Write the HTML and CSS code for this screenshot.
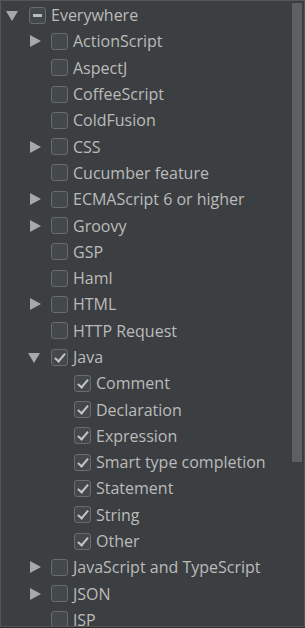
FILE: index.html
```html
<!DOCTYPE html>
<html lang="en">
<head>
  <meta charset="UTF-8" />
  <title>Live Templates</title>
  <link rel="stylesheet" href="styles.css">
</head>
<body>
  <div class="panel">
    <div class="tree">
      <div class="row lvl0"><span class="arrow down"></span><span class="box mixed"></span><span class="label">Everywhere</span></div>
      <div class="row lvl1"><span class="arrow right"></span><span class="box"></span><span class="label">ActionScript</span></div>
      <div class="row lvl1"><span class="arrow"></span><span class="box"></span><span class="label">AspectJ</span></div>
      <div class="row lvl1"><span class="arrow"></span><span class="box"></span><span class="label">CoffeeScript</span></div>
      <div class="row lvl1"><span class="arrow"></span><span class="box"></span><span class="label">ColdFusion</span></div>
      <div class="row lvl1"><span class="arrow right"></span><span class="box"></span><span class="label">CSS</span></div>
      <div class="row lvl1"><span class="arrow"></span><span class="box"></span><span class="label">Cucumber feature</span></div>
      <div class="row lvl1"><span class="arrow right"></span><span class="box"></span><span class="label">ECMAScript 6 or higher</span></div>
      <div class="row lvl1"><span class="arrow right"></span><span class="box"></span><span class="label">Groovy</span></div>
      <div class="row lvl1"><span class="arrow"></span><span class="box"></span><span class="label">GSP</span></div>
      <div class="row lvl1"><span class="arrow"></span><span class="box"></span><span class="label">Haml</span></div>
      <div class="row lvl1"><span class="arrow right"></span><span class="box"></span><span class="label">HTML</span></div>
      <div class="row lvl1"><span class="arrow"></span><span class="box"></span><span class="label">HTTP Request</span></div>
      <div class="row lvl1"><span class="arrow down"></span><span class="box checked"></span><span class="label">Java</span></div>
      <div class="row lvl2"><span class="box checked"></span><span class="label">Comment</span></div>
      <div class="row lvl2"><span class="box checked"></span><span class="label">Declaration</span></div>
      <div class="row lvl2"><span class="box checked"></span><span class="label">Expression</span></div>
      <div class="row lvl2"><span class="box checked"></span><span class="label">Smart type completion</span></div>
      <div class="row lvl2"><span class="box checked"></span><span class="label">Statement</span></div>
      <div class="row lvl2"><span class="box checked"></span><span class="label">String</span></div>
      <div class="row lvl2"><span class="box checked"></span><span class="label">Other</span></div>
      <div class="row lvl1"><span class="arrow right"></span><span class="box"></span><span class="label">JavaScript and TypeScript</span></div>
      <div class="row lvl1"><span class="arrow right"></span><span class="box"></span><span class="label">JSON</span></div>
      <div class="row lvl1"><span class="arrow"></span><span class="box"></span><span class="label">JSP</span></div>
    </div>
    <div class="scrollbar"><div class="thumb"></div></div>
  </div>
</body>
</html>
```
FILE: styles.css
```css
html, body {
  margin: 0;
  padding: 0;
  background-color: #2b2b2b;
}

body {
  font-family: "Open Sans", "Noto Sans", sans-serif;
  font-size: 16px;
  color: #bbbbbb;
}

.panel {
  width: 305px;
  height: 627px;
  box-sizing: border-box;
  border: 1px solid #555555;
  background-color: #3c3f41;
  display: flex;
  overflow: hidden;
}

.tree {
  flex: 1;
  padding-top: 1px;
}

.row {
  height: 26.3px;
  display: flex;
  align-items: center;
  white-space: nowrap;
}

.lvl1 { padding-left: 22px; }
.lvl2 { padding-left: 73px; }

.arrow {
  width: 22px;
  height: 14px;
  margin-right: 6px;
  position: relative;
  flex: none;
}

.arrow.down::before {
  content: "";
  position: absolute;
  left: 5px;
  top: 3px;
  border-left: 6px solid transparent;
  border-right: 6px solid transparent;
  border-top: 10px solid #a8a8a8;
}

.arrow.right::before {
  content: "";
  position: absolute;
  left: 7px;
  top: 1px;
  border-top: 6px solid transparent;
  border-bottom: 6px solid transparent;
  border-left: 11px solid #a8a8a8;
}

.box {
  width: 17px;
  height: 17px;
  box-sizing: border-box;
  border: 1px solid #6b6b6b;
  border-radius: 3px;
  background-color: #43494a;
  margin-right: 5px;
  position: relative;
  flex: none;
}

.box.mixed::before {
  content: "";
  position: absolute;
  left: 3px;
  top: 6px;
  width: 9px;
  height: 3px;
  background-color: #bbbbbb;
}

.box.checked::before {
  content: "";
  position: absolute;
  left: 5px;
  top: 1px;
  width: 4px;
  height: 9px;
  border-right: 2px solid #c4c4c4;
  border-bottom: 2px solid #c4c4c4;
  transform: rotate(40deg);
}

.label {
  line-height: 1;
}

.scrollbar {
  width: 10px;
  margin: 2px 2px 0 0;
  flex: none;
}

.thumb {
  height: 459px;
  background-color: #5d5f61;
}
```
